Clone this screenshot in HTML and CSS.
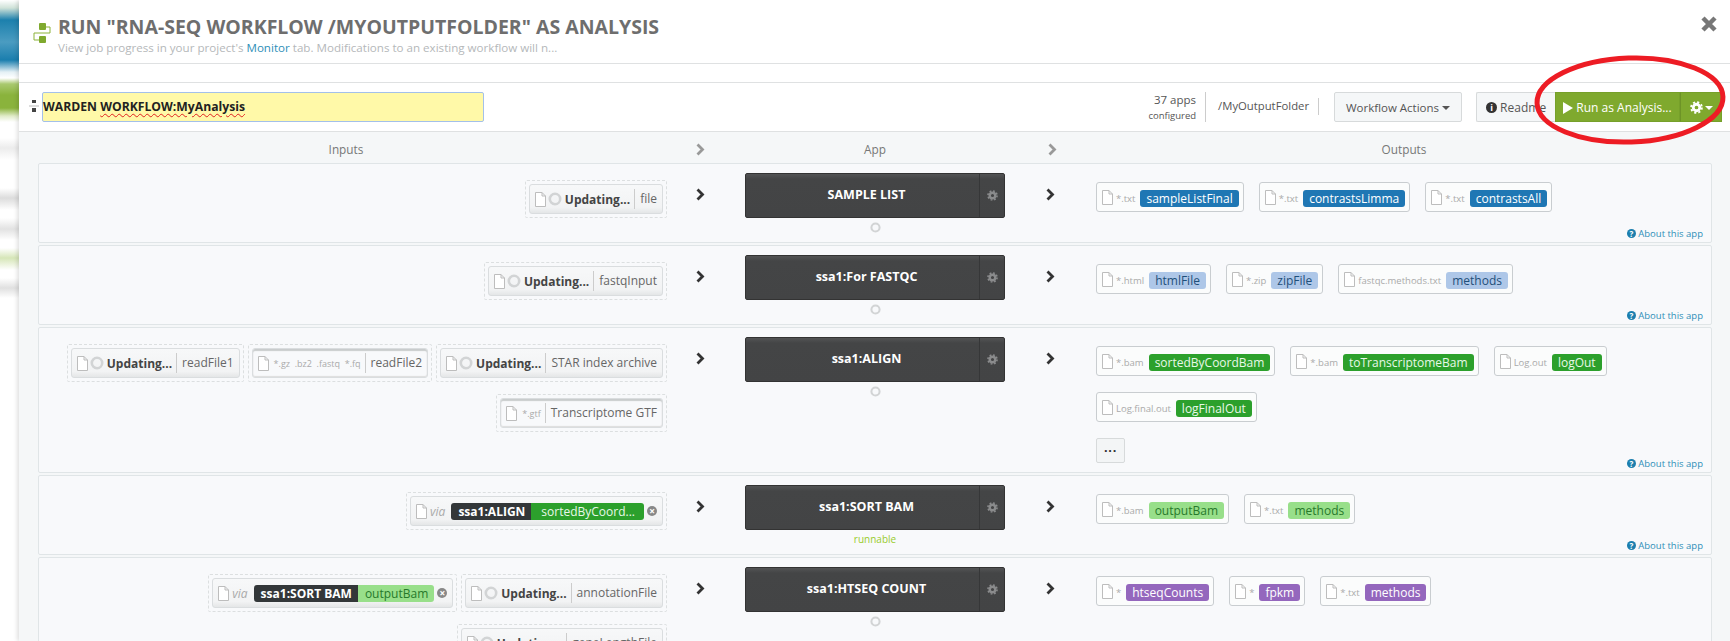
FILE: index.html
```html
<!DOCTYPE html>
<html lang="en">
<head>
  <meta charset="UTF-8" />
  <title>Run as Analysis</title>
  <link rel="stylesheet" href="styles.css">
</head>
<body>
  <svg class="defs" width="0" height="0">
    <symbol id="file" viewBox="0 0 11 15">
      <path d="M.5.5H7L10.5 4V14.500H.5Z M7 .5V4H10.500" fill="#fff" stroke="#bdbdbd"/>
    </symbol>
    <symbol id="spin" viewBox="0 0 14 14">
      <circle cx="7" cy="7" r="5.200" fill="none" stroke="#d2d4d5" stroke-width="2.600"/>
    </symbol>
    <symbol id="gear" viewBox="0 0 14 14">
      <circle cx="7" cy="7" r="3.500" fill="none" stroke="currentColor" stroke-width="3"/>
      <circle cx="7" cy="7" r="5.800" fill="none" stroke="currentColor" stroke-width="2" stroke-dasharray="2.280 2.280"/>
    </symbol>
    <symbol id="chev" viewBox="0 0 9 13">
      <path d="M1.500 1.500L6.500 6.500L1.500 11.500" fill="none" stroke="currentColor" stroke-width="2.800"/>
    </symbol>
  </svg>

  <div class="backdrop"></div>

  <div class="modal">
    <header class="modal-head">
      <svg class="wf-icon" width="18" height="22" viewBox="0 0 18 22">
        <path d="M13 5H17V11H1V18H6" fill="none" stroke="#8cb33a"/>
        <rect x="6" y="1" width="7" height="7" rx="1" fill="#7fa92e"/>
        <rect x="6" y="14" width="7" height="7" rx="1" fill="#7fa92e"/>
      </svg>
      <div>
        <h1>RUN "RNA-SEQ WORKFLOW /MYOUTPUTFOLDER" AS ANALYSIS</h1>
        <p>View job progress in your project's <a href="#">Monitor</a> tab. Modifications to an existing workflow will n...</p>
      </div>
      <svg class="close" width="18" height="18" viewBox="0 0 18 18">
        <path d="M3 3L15 15M15 3L3 15" stroke="#777" stroke-width="4.500"/>
      </svg>
    </header>

    <div class="spacer"></div>

    <div class="toolbar">
      <svg class="handle" width="10" height="12" viewBox="0 0 10 12">
        <path d="M0 6H10" stroke="#bbb"/>
        <rect x="3" y="0" width="4" height="3" fill="#444"/>
        <rect x="3" y="8" width="4" height="4" fill="#444"/>
      </svg>
      <div class="name-input">WARDEN <span class="misspelt">WORKFLOW:MyAnalysis</span></div>
      <div class="tools">
        <div class="apps"><span>37 apps</span><small>configured</small></div>
        <div class="folder"><span>/MyOutputFolder</span></div>
        <button class="btn wf-actions">Workflow Actions <i class="caret"></i></button>
        <div class="run-group">
          <button class="btn readme"><span class="info">i</span> Readme</button>
          <button class="btn run"><i class="play"></i>Run as Analysis...</button>
          <button class="btn run gear-btn"><svg width="13" height="13"><use href="#gear"/></svg><i class="caret"></i></button>
        </div>
      </div>
    </div>

    <div class="columns">
      <div class="col-inputs">Inputs</div>
      <svg class="chev first" width="9" height="13"><use href="#chev"/></svg>
      <div>App</div>
      <svg class="chev second" width="9" height="13"><use href="#chev"/></svg>
      <div>Outputs</div>
    </div>

    <div class="stage">
      <section class="stage-row">
        <div class="inputs">
          <div class="slot"><div class="chip"><svg class="fi" width="11" height="15"><use href="#file"/></svg><svg class="sp" width="14" height="14"><use href="#spin"/></svg><b>Updating...</b><span class="label">file</span></div></div>
        </div>
        <svg class="arrow into" width="9" height="13"><use href="#chev"/></svg>
        <div class="app">
          <div class="node"><span>SAMPLE LIST</span><div class="node-gear"><svg width="11" height="11"><use href="#gear"/></svg></div></div>
          <svg class="status" width="11" height="11"><use href="#spin"/></svg>
        </div>
        <svg class="arrow" width="9" height="13"><use href="#chev"/></svg>
        <div class="outputs">
          <div class="out-list">
            <div class="out"><svg width="11" height="15"><use href="#file"/></svg><em>*.txt</em><span class="pill blue">sampleListFinal</span></div>
            <div class="out"><svg width="11" height="15"><use href="#file"/></svg><em>*.txt</em><span class="pill blue">contrastsLimma</span></div>
            <div class="out"><svg width="11" height="15"><use href="#file"/></svg><em>*.txt</em><span class="pill blue">contrastsAll</span></div>
          </div>
          <div class="out-foot"><a class="about" href="#"><span class="q">?</span> About this app</a></div>
        </div>
      </section>

      <section class="stage-row">
        <div class="inputs">
          <div class="slot"><div class="chip"><svg class="fi" width="11" height="15"><use href="#file"/></svg><svg class="sp" width="14" height="14"><use href="#spin"/></svg><b>Updating...</b><span class="label">fastqInput</span></div></div>
        </div>
        <svg class="arrow into" width="9" height="13"><use href="#chev"/></svg>
        <div class="app">
          <div class="node"><span>ssa1:For FASTQC</span><div class="node-gear"><svg width="11" height="11"><use href="#gear"/></svg></div></div>
          <svg class="status" width="11" height="11"><use href="#spin"/></svg>
        </div>
        <svg class="arrow" width="9" height="13"><use href="#chev"/></svg>
        <div class="outputs">
          <div class="out-list">
            <div class="out"><svg width="11" height="15"><use href="#file"/></svg><em>*.html</em><span class="pill pale-blue">htmlFile</span></div>
            <div class="out"><svg width="11" height="15"><use href="#file"/></svg><em>*.zip</em><span class="pill pale-blue">zipFile</span></div>
            <div class="out"><svg width="11" height="15"><use href="#file"/></svg><em>fastqc.methods.txt</em><span class="pill pale-blue">methods</span></div>
          </div>
          <div class="out-foot"><a class="about" href="#"><span class="q">?</span> About this app</a></div>
        </div>
      </section>

      <section class="stage-row tall">
        <div class="inputs">
          <div class="slot"><div class="chip"><svg class="fi" width="11" height="15"><use href="#file"/></svg><svg class="sp" width="14" height="14"><use href="#spin"/></svg><b>Updating...</b><span class="label">readFile1</span></div></div>
          <div class="slot"><div class="chip required"><svg class="fi" width="11" height="15"><use href="#file"/></svg><em class="exts">*.gz&nbsp; .bz2&nbsp; .fastq&nbsp; *.fq</em><span class="label">readFile2</span></div></div>
          <div class="slot"><div class="chip"><svg class="fi" width="11" height="15"><use href="#file"/></svg><svg class="sp" width="14" height="14"><use href="#spin"/></svg><b>Updating...</b><span class="label">STAR index archive</span></div></div>
          <div class="slot"><div class="chip required"><svg class="fi" width="11" height="15"><use href="#file"/></svg><em class="exts">*.gtf</em><span class="label">Transcriptome GTF</span></div></div>
        </div>
        <svg class="arrow into" width="9" height="13"><use href="#chev"/></svg>
        <div class="app">
          <div class="node"><span>ssa1:ALIGN</span><div class="node-gear"><svg width="11" height="11"><use href="#gear"/></svg></div></div>
          <svg class="status" width="11" height="11"><use href="#spin"/></svg>
        </div>
        <svg class="arrow" width="9" height="13"><use href="#chev"/></svg>
        <div class="outputs">
          <div class="out-list">
            <div class="out"><svg width="11" height="15"><use href="#file"/></svg><em>*.bam</em><span class="pill green">sortedByCoordBam</span></div>
            <div class="out"><svg width="11" height="15"><use href="#file"/></svg><em>*.bam</em><span class="pill green">toTranscriptomeBam</span></div>
            <div class="out"><svg width="11" height="15"><use href="#file"/></svg><em>Log.out</em><span class="pill green">logOut</span></div>
            <div class="out"><svg width="11" height="15"><use href="#file"/></svg><em>Log.final.out</em><span class="pill green">logFinalOut</span></div>
          </div>
          <div class="out-foot"><button class="more">&middot;&middot;&middot;</button><a class="about" href="#"><span class="q">?</span> About this app</a></div>
        </div>
      </section>

      <section class="stage-row">
        <div class="inputs">
          <div class="slot"><div class="chip"><svg class="fi" width="11" height="15"><use href="#file"/></svg><em class="via">via</em><span class="link-name">ssa1:ALIGN</span><span class="link-out green wide">sortedByCoord...</span><span class="unlink">&times;</span></div></div>
        </div>
        <svg class="arrow into" width="9" height="13"><use href="#chev"/></svg>
        <div class="app">
          <div class="node"><span>ssa1:SORT BAM</span><div class="node-gear"><svg width="11" height="11"><use href="#gear"/></svg></div></div>
          <div class="runnable">runnable</div>
        </div>
        <svg class="arrow" width="9" height="13"><use href="#chev"/></svg>
        <div class="outputs">
          <div class="out-list">
            <div class="out"><svg width="11" height="15"><use href="#file"/></svg><em>*.bam</em><span class="pill pale-green">outputBam</span></div>
            <div class="out"><svg width="11" height="15"><use href="#file"/></svg><em>*.txt</em><span class="pill pale-green">methods</span></div>
          </div>
          <div class="out-foot"><a class="about" href="#"><span class="q">?</span> About this app</a></div>
        </div>
      </section>

      <section class="stage-row">
        <div class="inputs">
          <div class="slot"><div class="chip"><svg class="fi" width="11" height="15"><use href="#file"/></svg><em class="via">via</em><span class="link-name">ssa1:SORT BAM</span><span class="link-out pale-green">outputBam</span><span class="unlink">&times;</span></div></div>
          <div class="slot"><div class="chip"><svg class="fi" width="11" height="15"><use href="#file"/></svg><svg class="sp" width="14" height="14"><use href="#spin"/></svg><b>Updating...</b><span class="label">annotationFile</span></div></div>
          <div class="slot"><div class="chip"><svg class="fi" width="11" height="15"><use href="#file"/></svg><svg class="sp" width="14" height="14"><use href="#spin"/></svg><b>Updating...</b><span class="label">geneLengthFile</span></div></div>
        </div>
        <svg class="arrow into" width="9" height="13"><use href="#chev"/></svg>
        <div class="app">
          <div class="node"><span>ssa1:HTSEQ COUNT</span><div class="node-gear"><svg width="11" height="11"><use href="#gear"/></svg></div></div>
          <svg class="status" width="11" height="11"><use href="#spin"/></svg>
        </div>
        <svg class="arrow" width="9" height="13"><use href="#chev"/></svg>
        <div class="outputs">
          <div class="out-list">
            <div class="out"><svg width="11" height="15"><use href="#file"/></svg><em>*</em><span class="pill purple">htseqCounts</span></div>
            <div class="out"><svg width="11" height="15"><use href="#file"/></svg><em>*</em><span class="pill purple">fpkm</span></div>
            <div class="out"><svg width="11" height="15"><use href="#file"/></svg><em>*.txt</em><span class="pill purple">methods</span></div>
          </div>
        </div>
      </section>
    </div>
  </div>

  <!-- hand-drawn annotation on top of the screenshot -->
  <svg class="scribble" width="210" height="100" viewBox="0 0 210 100">
    <ellipse cx="105" cy="47" rx="93" ry="42" fill="none" stroke="#ed1c24" stroke-width="5" transform="rotate(-2 105 47)"/>
  </svg>
</body>
</html>
```

FILE: styles.css
```css
* {
  box-sizing: border-box;
}

html, body {
  height: 641px;
  margin: 0;
  overflow: hidden;
  background: #fff;
  font-family: "Open Sans", "Liberation Sans", sans-serif;
  color: #555;
}

body {
  display: flex;
}

.defs {
  position: absolute;
}

/* page behind the modal, blurred */
.backdrop {
  width: 19px;
  flex-shrink: 0;
  background: linear-gradient(to bottom,
    #fff 0, #cfe2d8 8px, #1c80ad 20px, #4b9cc1 42px, #1a7eae 60px, #e4f0f5 72px, #fff 78px,
    #a9c96f 84px, #8ab33c 95px, #8ab33c 108px, #e0ebc8 116px, #fff 122px,
    #fff 138px, #ececec 148px, #fff 160px,
    #fff 188px, #dcdcdc 198px, #fff 210px,
    #fff 218px, #e2e2e2 229px, #fff 240px,
    #fff 248px, #d6e6b8 258px, #fff 270px,
    #fff 278px, #e0e0e0 288px, #fff 298px, #fff 641px);
}

.modal {
  flex: 1;
  min-width: 0;
  display: flex;
  flex-direction: column;
  background: #f5f7f8;
  box-shadow: -2px 0 4px rgba(0, 0, 0, 0.12);
}

.modal-head {
  height: 64px;
  flex-shrink: 0;
  display: flex;
  align-items: flex-start;
  padding: 12px 12px 0 14px;
  background: #fff;
  border-bottom: 1px solid #dfe1e2;
}

.wf-icon {
  margin: 10px 7px 0 0;
  flex-shrink: 0;
}

.modal-head h1 {
  margin: 3px 0 0;
  font-size: 19.500px;
  line-height: 24px;
  font-weight: 700;
  color: #6e6e6e;
  white-space: nowrap;
}

.modal-head p {
  margin: 1px 0 0;
  font-size: 11.600px;
  line-height: 16px;
  color: #b5b8ba;
  white-space: nowrap;
}

.modal-head a {
  color: #2f8fb8;
  text-decoration: none;
}

.close {
  margin: 3px 0 0 auto;
}

.spacer {
  height: 18px;
  flex-shrink: 0;
  background: #fff;
}

.toolbar {
  height: 50px;
  flex-shrink: 0;
  display: flex;
  align-items: flex-start;
  padding: 9px 8px 0 10px;
  background: #fff;
  border-top: 1px solid #dfe1e2;
  border-bottom: 1px solid #dfe1e2;
}

.handle {
  margin: 8px 3px 0 0;
  flex-shrink: 0;
}

.name-input {
  width: 442px;
  height: 30px;
  background: #fff9a8;
  border: 1px solid #a3c0ea;
  border-radius: 2px;
  font-size: 12.200px;
  font-weight: 700;
  line-height: 28px;
  color: #222;
}

.misspelt {
  text-decoration: underline wavy #e02020 1px;
  text-underline-offset: 2px;
}

.tools {
  margin-left: auto;
  display: flex;
  align-items: flex-start;
}

.apps {
  height: 30px;
  display: flex;
  flex-direction: column;
  align-items: flex-end;
  padding-right: 9px;
  border-right: 1px solid #ccc;
  font-size: 11.500px;
  line-height: 15px;
  color: #555;
}

.apps small {
  font-size: 9.500px;
  line-height: 17px;
}

.folder {
  height: 17px;
  margin: 6px 15px 0 0;
  padding: 0 9px 0 12px;
  border-right: 1px solid #ccc;
  font-size: 11.300px;
  line-height: 15px;
}

.btn {
  height: 30px;
  padding: 0;
  font-family: inherit;
  font-size: 12px;
  color: #555;
  background: #f5f7f8;
  border: 1px solid #d7dadb;
  border-radius: 2px;
  white-space: nowrap;
}

.wf-actions {
  width: 128px;
  margin-right: 14px;
  font-size: 11.500px;
}

.caret {
  display: inline-block;
  border-top: 4px solid currentColor;
  border-left: 4px solid transparent;
  border-right: 4px solid transparent;
  vertical-align: 2px;
}

.run-group {
  display: flex;
}

.readme {
  width: 79px;
  border-right: 0;
  border-radius: 2px 0 0 2px;
  text-align: left;
  padding-left: 9px;
}

.info {
  display: inline-block;
  width: 11px;
  height: 11px;
  border-radius: 50%;
  background: #333;
  color: #fff;
  font-size: 9px;
  font-weight: 700;
  line-height: 11px;
  text-align: center;
  vertical-align: 1px;
}

.run {
  width: 125px;
  background: #7fa92e;
  border: 1px solid #76a02a;
  border-radius: 0;
  color: #fff;
}

.play {
  display: inline-block;
  border-left: 10px solid #fff;
  border-top: 6px solid transparent;
  border-bottom: 6px solid transparent;
  margin-right: 3px;
  vertical-align: -2px;
}

.gear-btn {
  width: 42px;
  border-left: 1px solid #6d9327;
}

.gear-btn svg {
  vertical-align: -2px;
  margin-right: 2px;
}

.columns {
  height: 31px;
  flex-shrink: 0;
  display: grid;
  grid-template-columns: 628px 78px 260px 91px 1fr;
  align-items: center;
  justify-items: center;
  padding: 3px 18px 0 20px;
  font-size: 11.800px;
  color: #777;
}

.col-inputs {
  padding-right: 14px;
}

.chev {
  color: #999;
}

.chev.first {
  margin-right: 11px;
}

.chev.second {
  margin-left: 3px;
}

.stage {
  display: flex;
  flex-direction: column;
  gap: 2px;
  margin: 0 18px 0 19px;
}

.stage-row {
  min-height: 80px;
  flex-shrink: 0;
  display: grid;
  grid-template-columns: 628px 78px 260px 91px 1fr;
  background: #f8f9fb;
  border: 1px solid #e0e5e7;
  border-radius: 2px;
}

.stage-row.tall {
  min-height: 146px;
}

.inputs {
  display: flex;
  flex-wrap: wrap;
  justify-content: flex-end;
  align-content: flex-start;
  gap: 12px 4px;
  padding-top: 16px;
}

.slot {
  height: 38px;
  padding: 3px;
  border: 1px dashed #dcdfe0;
  border-radius: 2px;
}

.chip {
  height: 30px;
  display: flex;
  align-items: center;
  padding: 0 5px;
  background: linear-gradient(to bottom, #f7f8f9, #f2f3f4 80%, #e4e6e7);
  border: 1px solid #dadddf;
  border-radius: 3px;
  font-size: 12px;
  color: #666;
  white-space: nowrap;
}

.chip.required {
  background: #f8f9fb;
  box-shadow: inset 0 2px 1px #c9cccd, inset 0 -1px 1px #ddd;
}

.chip .fi {
  flex-shrink: 0;
}

.chip .sp {
  margin: 0 3px 0 2px;
  flex-shrink: 0;
}

.chip b {
  font-size: 12px;
  color: #444;
}

.chip .label {
  margin-left: 4px;
  padding-left: 5px;
  border-left: 1px solid #ccc;
  line-height: 20px;
}

.chip .exts {
  margin-left: 5px;
  font-style: normal;
  font-size: 9px;
  color: #aaa;
}

.via {
  margin: 0 6px 0 3px;
  font-size: 12px;
  color: #aaa;
}

.link-name {
  padding: 0 6px 0 7px;
  height: 17px;
  line-height: 17px;
  background: #333739;
  border-radius: 3px 0 0 3px;
  color: #fff;
  font-size: 12px;
  font-weight: 700;
}

.link-out {
  padding: 0 6px 0 7px;
  height: 17px;
  line-height: 17px;
  border-radius: 0 3px 3px 0;
  font-size: 12px;
}

.link-out.wide {
  padding: 0 9px 0 10px;
}

.unlink {
  width: 10px;
  height: 10px;
  margin-left: 3px;
  border-radius: 50%;
  background: #888;
  color: #fff;
  font-size: 10px;
  font-weight: 700;
  line-height: 10px;
  text-align: center;
}

.arrow {
  justify-self: center;
  margin-top: 24px;
  color: #333;
}

.arrow.into {
  margin-right: 11px;
}

.app {
  display: flex;
  flex-direction: column;
  align-items: center;
  padding-top: 9px;
}

.node {
  width: 260px;
  height: 45px;
  display: flex;
  background: linear-gradient(to bottom, #525354, #444546 12%, #434445);
  border: 1px solid #333;
  border-radius: 2px;
  color: #fff;
  font-size: 12.500px;
  font-weight: 700;
}

.node span {
  flex: 1;
  padding: 0 0 0 8px;
  text-align: center;
  line-height: 41px;
}

.node-gear {
  width: 25px;
  display: flex;
  align-items: center;
  justify-content: center;
  border-left: 1px solid #363738;
  color: #8a8b8c;
}

.status {
  margin-top: 4px;
}

.runnable {
  margin-top: 1px;
  font-size: 10px;
  line-height: 16px;
  color: #98cc2c;
}

.outputs {
  display: flex;
  flex-direction: column;
  padding: 18px 8px 2px 0;
}

.out-list {
  display: flex;
  flex-wrap: wrap;
  gap: 16px 15px;
}

.out {
  height: 30px;
  display: flex;
  align-items: center;
  padding: 0 4px 0 5px;
  background: #fbfcfc;
  border: 1px solid #c9cdd0;
  border-radius: 3px;
  white-space: nowrap;
}

.out em {
  margin: 2px 5px 0 3px;
  font-style: normal;
  font-size: 9.500px;
  color: #aaa;
}

.pill {
  height: 17px;
  margin-top: 3px;
  padding: 0 6px;
  border-radius: 3px;
  font-size: 12px;
  line-height: 17px;
}

.blue {
  background: #1f77b4;
  color: #fff;
}

.pale-blue {
  background: #aec7e8;
  color: #1f4f7a;
}

.green {
  background: #2ca02c;
  color: #e8f8e8;
}

.pale-green {
  background: #98df8a;
  color: #27792a;
}

.purple {
  background: #9467bd;
  color: #fff;
}

.out-foot {
  display: flex;
  align-items: flex-end;
  justify-content: flex-end;
  margin-top: auto;
}

.more {
  width: 29px;
  height: 25px;
  margin: 16px auto 7px 0;
  padding: 0;
  background: #f3f5f6;
  border: 1px solid #d7dadb;
  border-radius: 2px;
  font-weight: 700;
  font-size: 13px;
  line-height: 15px;
  color: #333;
}

.about {
  font-size: 9.500px;
  line-height: 13px;
  color: #2f8fb8;
  text-decoration: none;
}

.q {
  display: inline-block;
  width: 9px;
  height: 9px;
  border-radius: 50%;
  background: #1c7fae;
  color: #fff;
  font-size: 8px;
  font-weight: 700;
  line-height: 9px;
  text-align: center;
}

.scribble {
  position: absolute;
  left: 1525px;
  top: 53px;
}
```
